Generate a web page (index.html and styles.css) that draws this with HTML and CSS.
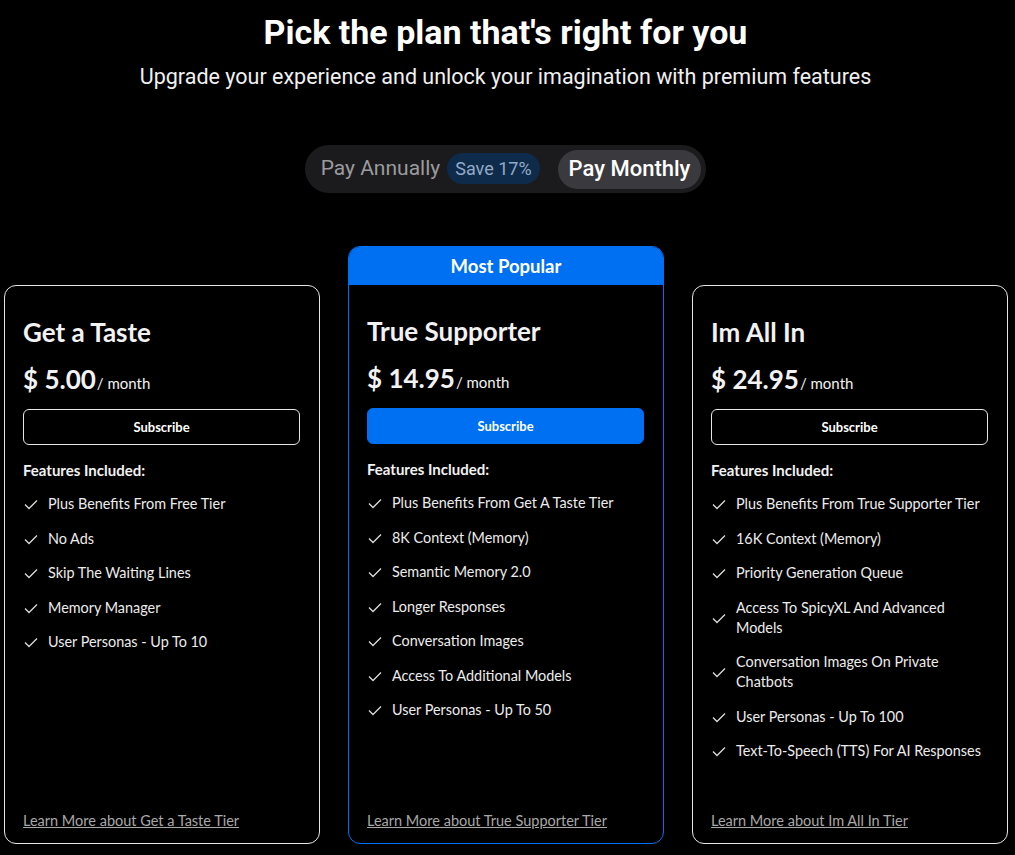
FILE: index.html
```html
<!DOCTYPE html>
<html>
<head>
  <link rel="stylesheet" href="styles.css">
</head>
<body>
  <div class="header">
    <h1 class="title">Pick the plan that's right for you</h1>
    <p class="subtitle">Upgrade your experience and unlock your imagination with premium features</p>
  </div>

  <div class="toggle-wrap">
    <div class="toggle">
      <div class="toggle-opt">Pay Annually <span class="save-badge">Save 17%</span></div>
      <div class="toggle-opt active">Pay Monthly</div>
    </div>
  </div>

  <div class="plans">
    <div class="plan">
      <div class="plan-body">
        <div class="plan-name">Get a Taste</div>
        <div class="plan-price"><span class="amount">$ 5.00</span><span class="per">/ month</span></div>
        <button class="sub-btn">Subscribe</button>
        <div class="features-title">Features Included:</div>
        <ul class="features">
          <li><svg class="check" viewBox="0 0 16 16"><path d="M2 8.5l4 4 8-8"/></svg><span>Plus Benefits From Free Tier</span></li>
          <li><svg class="check" viewBox="0 0 16 16"><path d="M2 8.5l4 4 8-8"/></svg><span>No Ads</span></li>
          <li><svg class="check" viewBox="0 0 16 16"><path d="M2 8.5l4 4 8-8"/></svg><span>Skip The Waiting Lines</span></li>
          <li><svg class="check" viewBox="0 0 16 16"><path d="M2 8.5l4 4 8-8"/></svg><span>Memory Manager</span></li>
          <li><svg class="check" viewBox="0 0 16 16"><path d="M2 8.5l4 4 8-8"/></svg><span>User Personas - Up To 10</span></li>
        </ul>
        <a class="learn-more" href="#">Learn More about Get a Taste Tier</a>
      </div>
    </div>

    <div class="plan popular">
      <div class="popular-tag">Most Popular</div>
      <div class="plan-body">
        <div class="plan-name">True Supporter</div>
        <div class="plan-price"><span class="amount">$ 14.95</span><span class="per">/ month</span></div>
        <button class="sub-btn primary">Subscribe</button>
        <div class="features-title">Features Included:</div>
        <ul class="features">
          <li><svg class="check" viewBox="0 0 16 16"><path d="M2 8.5l4 4 8-8"/></svg><span>Plus Benefits From Get A Taste Tier</span></li>
          <li><svg class="check" viewBox="0 0 16 16"><path d="M2 8.5l4 4 8-8"/></svg><span>8K Context (Memory)</span></li>
          <li><svg class="check" viewBox="0 0 16 16"><path d="M2 8.5l4 4 8-8"/></svg><span>Semantic Memory 2.0</span></li>
          <li><svg class="check" viewBox="0 0 16 16"><path d="M2 8.5l4 4 8-8"/></svg><span>Longer Responses</span></li>
          <li><svg class="check" viewBox="0 0 16 16"><path d="M2 8.5l4 4 8-8"/></svg><span>Conversation Images</span></li>
          <li><svg class="check" viewBox="0 0 16 16"><path d="M2 8.5l4 4 8-8"/></svg><span>Access To Additional Models</span></li>
          <li><svg class="check" viewBox="0 0 16 16"><path d="M2 8.5l4 4 8-8"/></svg><span>User Personas - Up To 50</span></li>
        </ul>
        <a class="learn-more" href="#">Learn More about True Supporter Tier</a>
      </div>
    </div>

    <div class="plan">
      <div class="plan-body">
        <div class="plan-name">Im All In</div>
        <div class="plan-price"><span class="amount">$ 24.95</span><span class="per">/ month</span></div>
        <button class="sub-btn">Subscribe</button>
        <div class="features-title">Features Included:</div>
        <ul class="features">
          <li><svg class="check" viewBox="0 0 16 16"><path d="M2 8.5l4 4 8-8"/></svg><span>Plus Benefits From True Supporter Tier</span></li>
          <li><svg class="check" viewBox="0 0 16 16"><path d="M2 8.5l4 4 8-8"/></svg><span>16K Context (Memory)</span></li>
          <li><svg class="check" viewBox="0 0 16 16"><path d="M2 8.5l4 4 8-8"/></svg><span>Priority Generation Queue</span></li>
          <li><svg class="check" viewBox="0 0 16 16"><path d="M2 8.5l4 4 8-8"/></svg><span>Access To SpicyXL And Advanced Models</span></li>
          <li><svg class="check" viewBox="0 0 16 16"><path d="M2 8.5l4 4 8-8"/></svg><span>Conversation Images On Private Chatbots</span></li>
          <li><svg class="check" viewBox="0 0 16 16"><path d="M2 8.5l4 4 8-8"/></svg><span>User Personas - Up To 100</span></li>
          <li><svg class="check" viewBox="0 0 16 16"><path d="M2 8.5l4 4 8-8"/></svg><span>Text-To-Speech (TTS) For AI Responses</span></li>
        </ul>
        <a class="learn-more" href="#">Learn More about Im All In Tier</a>
      </div>
    </div>
  </div>
</body>
</html>
```

FILE: styles.css
```css
body {
  margin: 0;
  background: #000;
  color: #f2f2f2;
  font-family: Lato, 'Noto Sans', sans-serif;
  height: 855px;
  overflow: hidden;
}

.header {
  text-align: center;
  font-family: Roboto, sans-serif;
  padding-top: 12px;
  padding-right: 4px;
}

.title {
  margin: 0;
  font-size: 34px;
  line-height: 40px;
  font-weight: 700;
  color: #fff;
}

.subtitle {
  margin: 11px 0 0;
  font-size: 21.5px;
  line-height: 28px;
  color: #f0f0f0;
}

.toggle-wrap {
  display: flex;
  justify-content: center;
  margin-top: 54px;
  padding-right: 4px;
}

.toggle {
  display: flex;
  align-items: center;
  gap: 18px;
  background: #1b1b1d;
  border-radius: 24px;
  padding: 5px 5px 4px 16px;
  font-family: Roboto, sans-serif;
}

.toggle-opt {
  display: flex;
  align-items: center;
  gap: 7px;
  font-size: 21px;
  line-height: 24px;
  padding-bottom: 3px;
  color: #9b9b9f;
}

.toggle-opt.active {
  background: #3a3a3e;
  color: #fff;
  font-weight: 500;
  font-size: 22px;
  height: 39px;
  padding: 0 11px 2px;
  box-sizing: border-box;
  border-radius: 20px;
}

.save-badge {
  background: #0f2b4b;
  color: #93a9c7;
  font-size: 18px;
  line-height: 31px;
  padding: 0 8px;
  border-radius: 16px;
}

.plans {
  display: grid;
  grid-template-columns: repeat(3, 316px);
  column-gap: 28px;
  margin: 53px 0 0 4px;
  height: 598px;
}

.plan {
  display: flex;
  flex-direction: column;
  margin-top: 39px;
  border: 1px solid #e6e6e6;
  border-radius: 12px;
}

.plan.popular {
  margin-top: 0;
  border-color: #0070f3;
}

.popular-tag {
  background: #0070f3;
  color: #fff;
  text-align: center;
  font-size: 18.5px;
  font-weight: 700;
  line-height: 38px;
  border-radius: 11px 11px 0 0;
}

.plan-body {
  flex: 1;
  display: flex;
  flex-direction: column;
  padding: 30px 19px 12px 18px;
}

.plan-name {
  font-size: 26px;
  font-weight: 700;
  line-height: 32px;
}

.plan-price {
  margin-top: 15px;
  line-height: 32px;
}

.amount {
  font-size: 26px;
  font-weight: 700;
}

.per {
  font-size: 15px;
  margin-left: 1px;
}

.sub-btn {
  margin-top: 10px;
  height: 36px;
  background: transparent;
  color: #fff;
  border: 1px solid #e6e6e6;
  border-radius: 6px;
  font-family: inherit;
  font-size: 13px;
  font-weight: 700;
  cursor: pointer;
}

.sub-btn.primary {
  background: #0070f3;
  border-color: #0070f3;
}

.features-title {
  margin-top: 15px;
  font-size: 15px;
  font-weight: 700;
  line-height: 20px;
}

.features {
  list-style: none;
  margin: 14px 0 0;
  padding: 0;
  display: flex;
  flex-direction: column;
  gap: 14.5px;
}

.features li {
  display: flex;
  align-items: center;
  gap: 9px;
  font-size: 14.4px;
  line-height: 20px;
  color: #ececec;
}

.check {
  flex: none;
  width: 16px;
  height: 16px;
  fill: none;
  stroke: #dcdcdc;
  stroke-width: 1.3;
}

.learn-more {
  margin-top: auto;
  font-size: 14.5px;
  line-height: 20px;
  color: #a8a8a8;
  text-decoration: underline;
  align-self: flex-start;
}
```
